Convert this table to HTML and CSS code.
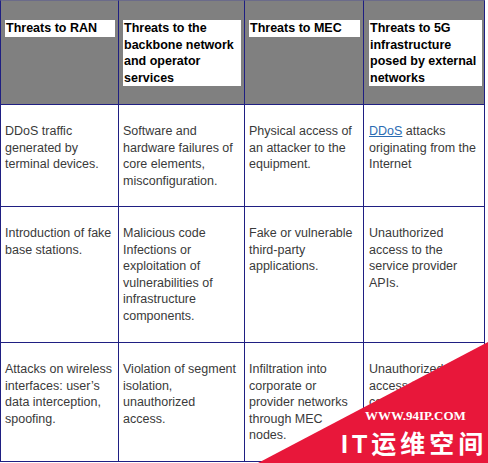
FILE: index.html
```html
<!DOCTYPE html>
<html>
<head>
<meta charset="utf-8">
<link rel="stylesheet" href="styles.css">
</head>
<body>
<div class="page">
  <div class="grid">
    <div class="cell head"><div class="hbox">Threats to RAN</div></div>
    <div class="cell head"><div class="hbox">Threats to the backbone network and operator services</div></div>
    <div class="cell head"><div class="hbox">Threats to MEC</div></div>
    <div class="cell head c4"><div class="hbox">Threats to 5G infrastructure posed by external networks</div></div>

    <div class="cell">DDoS traffic generated by terminal devices.</div>
    <div class="cell">Software and hardware failures of core elements, misconfiguration.</div>
    <div class="cell">Physical access of an attacker to the equipment.</div>
    <div class="cell c4"><a class="link" href="#">DDoS</a> attacks originating from the Internet</div>

    <div class="cell">Introduction of fake base stations.</div>
    <div class="cell">Malicious code Infections or exploitation of vulnerabilities of infrastructure components.</div>
    <div class="cell">Fake or vulnerable third-party applications.</div>
    <div class="cell c4">Unauthorized access to the service provider APIs.</div>

    <div class="cell last">Attacks on wireless interfaces: user’s data interception, spoofing.</div>
    <div class="cell last">Violation of segment isolation, unauthorized access.</div>
    <div class="cell last">Infiltration into corporate or provider networks through MEC nodes.</div>
    <div class="cell last c4">Unauthorized access to the corporate networks.</div>
  </div>

  <div class="watermark">
    <svg class="wm-shape" width="230" height="121" viewBox="0 0 230 121">
      <polygon points="230,0 230,121 0,121" fill="#e8173a"/>
    </svg>
    <div class="wm-url">WWW.94IP.COM</div>
    <div class="wm-name">IT运维空间</div>
  </div>
</div>
</body>
</html>
```

FILE: styles.css
```css
html, body {
  margin: 0;
  padding: 0;
  background: #ffffff;
}

.page {
  position: relative;
  width: 488px;
  height: 463px;
  overflow: hidden;
  font-family: "Liberation Sans", Arial, sans-serif;
  font-size: 12.5px;
  line-height: 16.5px;
  color: #3a3a3a;
}

.grid {
  display: grid;
  grid-template-columns: 118px 126px 119px 121px;
  grid-template-rows: 105px 102px 136px 119px;
  width: 485px;
}

.cell {
  box-sizing: border-box;
  border-right: 1px solid #1f1f82;
  border-bottom: 1px solid #1f1f82;
  padding: 18px 3px 0 4px;
}

.grid > .cell:nth-child(4n+1) {
  border-left: 1px solid #1f1f82;
  width: 119px;
  margin-left: 0;
}

.grid {
  grid-template-columns: 119px 126px 119px 121px;
}

.head {
  background: #808080;
  border-top: 1px solid #6b6b8a;
  color: #000000;
  font-weight: bold;
  padding-top: 19px;
}

.hbox {
  background: #ffffff;
  padding-left: 1px;
}

.c4 {
  padding-left: 5px;
  padding-right: 2px;
}

.link {
  color: #2b6cb3;
  text-decoration: underline;
}

.watermark {
  position: absolute;
  right: 0;
  bottom: 0;
  width: 230px;
  height: 121px;
}

.wm-shape {
  position: absolute;
  left: 0;
  top: 0;
  display: block;
}

.wm-url {
  position: absolute;
  left: 107px;
  top: 67px;
  font-family: "Liberation Serif", "Times New Roman", serif;
  font-weight: bold;
  font-size: 13px;
  line-height: 14px;
  color: #ffffff;
  white-space: nowrap;
}

.wm-name {
  position: absolute;
  left: 83px;
  top: 88px;
  font-family: "Liberation Sans", "Noto Sans CJK SC", sans-serif;
  font-weight: bold;
  font-size: 25px;
  line-height: 28px;
  letter-spacing: 4px;
  color: #ffffff;
  white-space: nowrap;
}
```
